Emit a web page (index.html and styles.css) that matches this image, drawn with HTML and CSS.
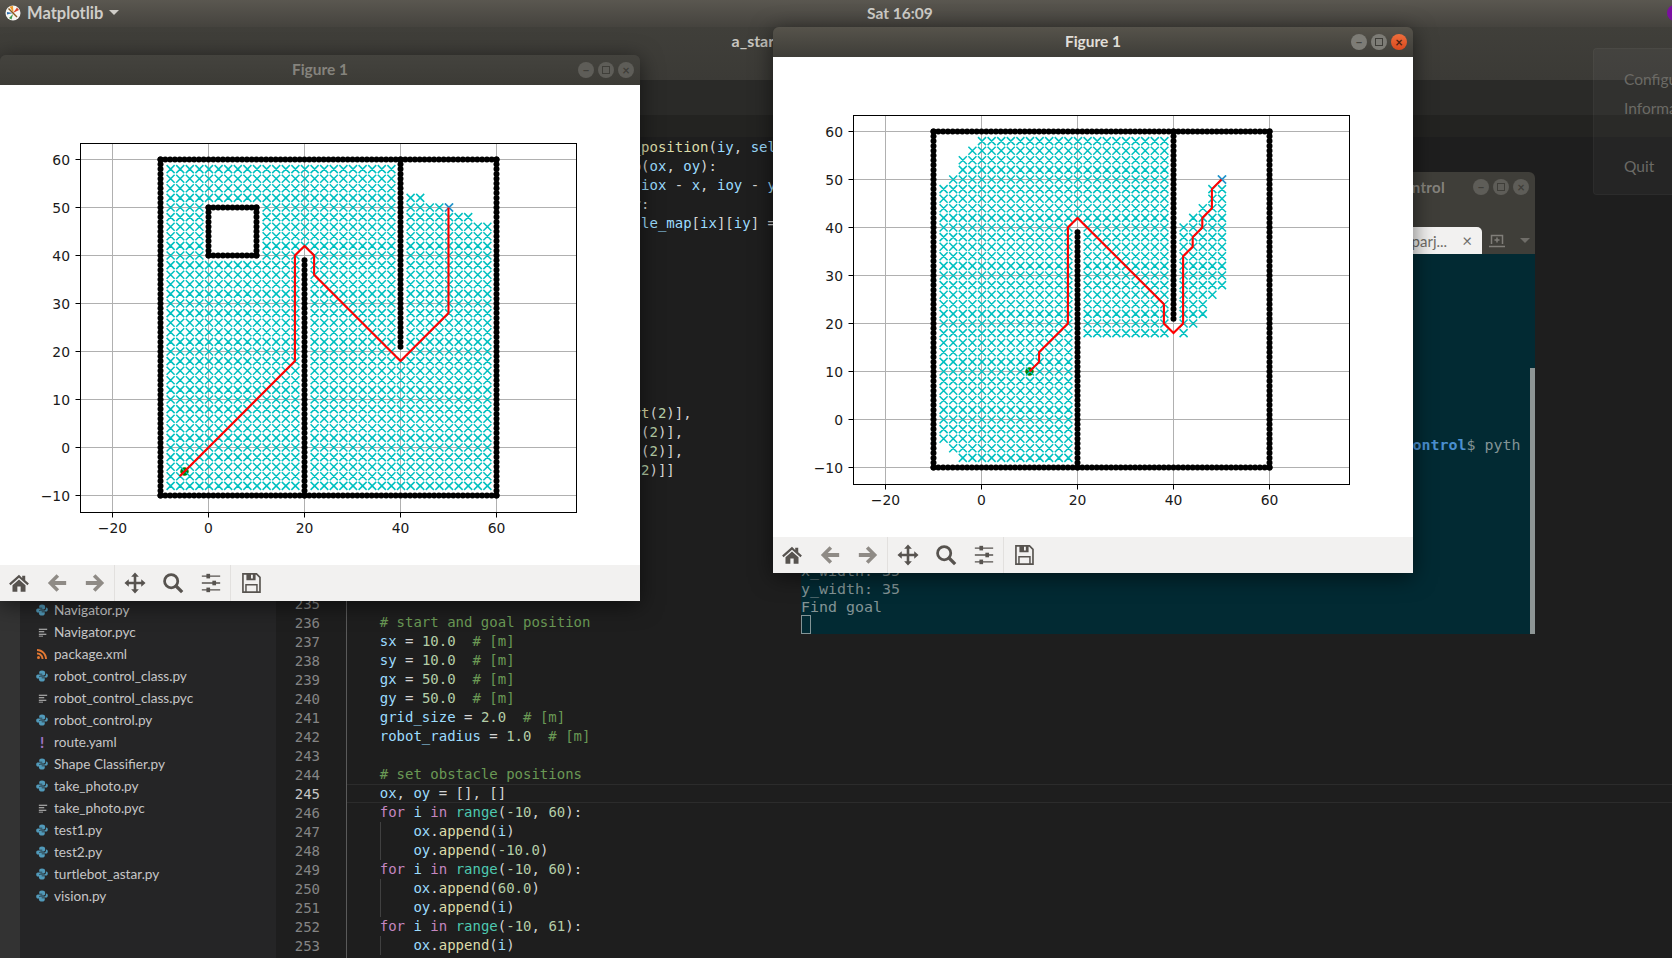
FILE: index.html
```html
<!DOCTYPE html>
<html lang="en">
<head>
    <meta charset="UTF-8">
    <meta name="viewport" content="width=device-width, initial-scale=1.0">
    <title>Matplotlib - Figure 1</title>
    <link rel="stylesheet" href="styles.css">
</head>
<body>
    <svg class="defs" width="0" height="0">
        <symbol id="i-home" viewBox="0 0 24 24">
            <path d="M12 3 1.2 12.6 2.8 14.4 12 6.3l9.2 8.1 1.6-1.8-4-3.5V4.2h-3.3v2.4z"/>
            <path d="M12 8.2 4.9 14.4V21.500h5.300v-5.600h3.600v5.600h5.300v-7.100z"/>
        </symbol>
        <symbol id="i-back" viewBox="0 0 24 24">
            <path d="M11.500 2.500 2 12l9.500 9.500 2.800-2.800-4.700-4.600H22V9.900H9.600l4.700-4.600z"/>
        </symbol>
        <symbol id="i-forward" viewBox="0 0 24 24">
            <path d="M12.500 2.500 22 12l-9.500 9.500-2.800-2.800 4.700-4.600H2V9.900h12.400L9.700 5.300z"/>
        </symbol>
        <symbol id="i-move" viewBox="0 0 24 24">
            <path d="M12 .5l4.200 4.700h-2.800v5.400h5.400V7.800l4.700 4.200-4.700 4.200v-2.800h-5.400v5.400h2.800L12 23.500l-4.200-4.700h2.800v-5.400H5.200v2.800L.5 12l4.700-4.200v2.800h5.400V5.200H7.800z"/>
        </symbol>
        <symbol id="i-zoom" viewBox="0 0 24 24">
            <circle cx="10" cy="10" r="7.200" fill="none" stroke="currentColor" stroke-width="3"/>
            <path d="M15 15l7 7" fill="none" stroke="currentColor" stroke-width="3.600"/>
        </symbol>
        <symbol id="i-sliders" viewBox="0 0 24 24">
            <path d="M2 4.500h20M2 12h20M2 19.500h20" fill="none" stroke="currentColor" stroke-width="1.500"/>
            <rect x="7" y="2" width="4" height="5"/>
            <rect x="13.500" y="9.500" width="4" height="5"/>
            <rect x="7" y="17" width="4" height="5"/>
        </symbol>
        <symbol id="i-save" viewBox="0 0 24 24">
            <path d="M3.200 2H18l3.800 3.800V22H3.200z" fill="none" stroke="currentColor" stroke-width="1.800"/>
            <path d="M7 2v7h10V2h-3v5h-2V2z"/>
            <path d="M6.500 22v-8h12v8" fill="none" stroke="currentColor" stroke-width="1.600"/>
        </symbol>
        <symbol id="i-py" viewBox="0 0 12 12">
            <path d="M6 .4C4 .4 3.200 1.200 3.200 2.500V3.800H6.300V4.400H1.900C.8 4.400.2 5.300.2 6.500.2 7.800.8 8.600 1.900 8.600H3V7.300C3 6.200 3.800 5.400 5 5.400H7.700C8.500 5.400 9.100 4.800 9.100 4V2.500C9.100 1.200 8 .4 6 .4Z"/>
            <path d="M6 11.600C8 11.600 8.800 10.800 8.800 9.500V8.200H5.700V7.600H10.100C11.200 7.600 11.800 6.700 11.800 5.500 11.800 4.200 11.200 3.400 10.100 3.400H9.900V4.700C9.900 5.800 9 6.600 7.900 6.600H4.300C3.500 6.600 2.900 7.200 2.900 8V9.500C2.900 10.800 4 11.600 6 11.600Z"/>
        </symbol>
        <symbol id="i-lines" viewBox="0 0 12 12">
            <path d="M1 2h10v1.200H1zM1 5h6.500v1.200H1zM1 8h9v1.200H1zM1 10.500h5v1H1z"/>
        </symbol>
        <symbol id="i-rss" viewBox="0 0 12 12">
            <circle cx="2.500" cy="9.500" r="1.500"/>
            <path d="M1 4.500c3.600 0 6.500 2.900 6.500 6.500H5.600C5.600 8.500 3.500 6.400 1 6.400z"/>
            <path d="M1 1c5.500 0 10 4.500 10 10H9.100C9.100 6.500 5.500 2.900 1 2.900z"/>
        </symbol>
    </svg>

    <header class="topbar">
        <div class="app-menu">
            <svg class="app-logo" viewBox="0 0 16 16">
                <circle cx="8" cy="8" r="7.500" fill="#f6f6f2"/>
                <path d="M8.500 8 4.500 1.500 8 1z" fill="#ee9a2a"/>
                <path d="M8 8 12 2.500 14 5z" fill="#d8442c"/>
                <path d="M8 9 4 13 6.500 14.500z" fill="#3c9a4a"/>
                <path d="M8 8 2 9.500 2 7z" fill="#3070b0"/>
                <path d="M3.500 3.500l8.500 8.500" stroke="#8a5a20" stroke-width="1.400"/>
            </svg>
            <span class="app-name">Matplotlib</span>
            <span class="menu-caret"></span>
        </div>
        <div class="clock">Sat 16:09</div>
        <div class="tray"><span class="tray-dot"></span></div>
    </header>

    <div class="editor">
        <div class="editor-title">a_star.py - catkin_ws - VS Code</div>
        <div class="editor-menu"></div>
        <div class="editor-tabs"></div>
        <div class="editor-body">
            <div class="activity"></div>
            <aside class="files">
                <div class="file"><svg class="ficon py"><use href="#i-py"/></svg>Navigator.py</div>
                <div class="file"><svg class="ficon txt"><use href="#i-lines"/></svg>Navigator.pyc</div>
                <div class="file"><svg class="ficon xml"><use href="#i-rss"/></svg>package.xml</div>
                <div class="file"><svg class="ficon py"><use href="#i-py"/></svg>robot_control_class.py</div>
                <div class="file"><svg class="ficon txt"><use href="#i-lines"/></svg>robot_control_class.pyc</div>
                <div class="file"><svg class="ficon py"><use href="#i-py"/></svg>robot_control.py</div>
                <div class="file"><span class="ficon yaml">!</span>route.yaml</div>
                <div class="file"><svg class="ficon py"><use href="#i-py"/></svg>Shape Classifier.py</div>
                <div class="file"><svg class="ficon py"><use href="#i-py"/></svg>take_photo.py</div>
                <div class="file"><svg class="ficon txt"><use href="#i-lines"/></svg>take_photo.pyc</div>
                <div class="file"><svg class="ficon py"><use href="#i-py"/></svg>test1.py</div>
                <div class="file"><svg class="ficon py"><use href="#i-py"/></svg>test2.py</div>
                <div class="file"><svg class="ficon py"><use href="#i-py"/></svg>turtlebot_astar.py</div>
                <div class="file"><svg class="ficon py"><use href="#i-py"/></svg>vision.py</div>
            </aside>
            <div class="gutter">
                <div>211</div><div>212</div><div>213</div><div>214</div><div>215</div><div>216</div>
                <div>217</div><div>218</div><div>219</div><div>220</div><div>221</div><div>222</div>
                <div>223</div><div>224</div><div>225</div><div>226</div><div>227</div><div>228</div>
                <div>229</div><div>230</div><div>231</div><div>232</div><div>233</div><div>234</div>
                <div>235</div><div>236</div><div>237</div><div>238</div><div>239</div><div>240</div>
                <div>241</div><div>242</div><div>243</div><div>244</div><div class="current">245</div>
                <div>246</div><div>247</div><div>248</div><div>249</div><div>250</div><div>251</div>
                <div>252</div><div>253</div>
            </div>
            <div class="code">
                <div>                <span class="v">y</span> = <span class="v">self</span>.<span class="f">calc_grid_position</span>(<span class="v">iy</span>, <span class="v">self</span>.<span class="v">miny</span>)</div>
                <div>                <span class="k">for</span> <span class="v">iox</span>, <span class="v">ioy</span> <span class="k">in</span> <span class="f">zip</span>(<span class="v">ox</span>, <span class="v">oy</span>):</div>
                <div>                    <span class="v">d</span> = <span class="v">math</span>.<span class="f">hypot</span>(<span class="v">iox</span> - <span class="v">x</span>, <span class="v">ioy</span> - <span class="v">y</span>)</div>
                <div>                    <span class="k">if</span> <span class="v">d</span> &lt;= <span class="v">self</span>.<span class="v">rr</span>:</div>
                <div>                        <span class="v">self</span>.<span class="v">obstacle_map</span>[<span class="v">ix</span>][<span class="v">iy</span>] = <span class="b">True</span></div>
                <div>                        <span class="k">break</span></div>
                <div> </div>
                <div>    <span class="f">@staticmethod</span></div>
                <div>    <span class="b">def</span> <span class="f">get_motion_model</span>():</div>
                <div>        <span class="c"># dx, dy, cost</span></div>
                <div>        <span class="v">motion</span> = [[<span class="n">1</span>, <span class="n">0</span>, <span class="n">1</span>],</div>
                <div>                  [<span class="n">0</span>, <span class="n">1</span>, <span class="n">1</span>],</div>
                <div>                  [<span class="n">-1</span>, <span class="n">0</span>, <span class="n">1</span>],</div>
                <div>                  [<span class="n">0</span>, <span class="n">-1</span>, <span class="n">1</span>],</div>
                <div>                  [<span class="n">-1</span>, <span class="n">-1</span>, <span class="v">math</span>.<span class="f">sqrt</span>(<span class="n">2</span>)],</div>
                <div>                  [<span class="n">-1</span>, <span class="n">1</span>, <span class="v">math</span>.<span class="f">sqrt</span>(<span class="n">2</span>)],</div>
                <div>                  [<span class="n">1</span>, <span class="n">-1</span>, <span class="v">math</span>.<span class="f">sqrt</span>(<span class="n">2</span>)],</div>
                <div>                  [<span class="n">1</span>, <span class="n">1</span>, <span class="v">math</span>.<span class="f">sqrt</span>(<span class="n">2</span>)]]</div>
                <div> </div>
                <div>        <span class="k">return</span> <span class="v">motion</span></div>
                <div> </div>
                <div> </div>
                <div><span class="b">def</span> <span class="f">main</span>():</div>
                <div>    <span class="f">print</span>(<span class="v">__file__</span> + <span class="s">" start!!"</span>)</div>
                <div> </div>
                <div>    <span class="c"># start and goal position</span></div>
                <div>    <span class="v">sx</span> = <span class="n">10.0</span>  <span class="c"># [m]</span></div>
                <div>    <span class="v">sy</span> = <span class="n">10.0</span>  <span class="c"># [m]</span></div>
                <div>    <span class="v">gx</span> = <span class="n">50.0</span>  <span class="c"># [m]</span></div>
                <div>    <span class="v">gy</span> = <span class="n">50.0</span>  <span class="c"># [m]</span></div>
                <div>    <span class="v">grid_size</span> = <span class="n">2.0</span>  <span class="c"># [m]</span></div>
                <div>    <span class="v">robot_radius</span> = <span class="n">1.0</span>  <span class="c"># [m]</span></div>
                <div> </div>
                <div>    <span class="c"># set obstacle positions</span></div>
                <div class="current">    <span class="v">ox</span>, <span class="v">oy</span> = [], []</div>
                <div>    <span class="k">for</span> <span class="v">i</span> <span class="k">in</span> <span class="t">range</span>(<span class="n">-10</span>, <span class="n">60</span>):</div>
                <div>    <span class="guide">    </span><span class="v">ox</span>.<span class="f">append</span>(<span class="v">i</span>)</div>
                <div>    <span class="guide">    </span><span class="v">oy</span>.<span class="f">append</span>(<span class="n">-10.0</span>)</div>
                <div>    <span class="k">for</span> <span class="v">i</span> <span class="k">in</span> <span class="t">range</span>(<span class="n">-10</span>, <span class="n">60</span>):</div>
                <div>    <span class="guide">    </span><span class="v">ox</span>.<span class="f">append</span>(<span class="n">60.0</span>)</div>
                <div>    <span class="guide">    </span><span class="v">oy</span>.<span class="f">append</span>(<span class="v">i</span>)</div>
                <div>    <span class="k">for</span> <span class="v">i</span> <span class="k">in</span> <span class="t">range</span>(<span class="n">-10</span>, <span class="n">61</span>):</div>
                <div>    <span class="guide">    </span><span class="v">ox</span>.<span class="f">append</span>(<span class="v">i</span>)</div>
            </div>
        </div>
    </div>

    <div class="popup">
        <div class="popup-item">Configure</div>
        <div class="popup-item">Information</div>
        <div class="popup-item popup-quit">Quit</div>
    </div>

    <section class="terminal">
        <div class="term-head">
            <div class="term-title">parjanya@parjanya-Inspiron-5567: ~/catkin_ws/src/turtlebot_ws/robot_control</div>
            <div class="win-buttons">
                <span class="wbtn">&#8211;</span>
                <span class="wbtn wbtn-max"></span>
                <span class="wbtn">&#215;</span>
            </div>
        </div>
        <div class="term-tabs">
            <div class="term-tab"><span>parjanya@parj...</span><span class="tab-close">&#215;</span></div>
            <svg class="tab-new" viewBox="0 0 16 14">
                <path d="M2.500 10V1.500h11V10M0 12.500h16M8 3.500v5M5.500 6h5" fill="none" stroke="#807e79" stroke-width="1.500"/>
            </svg>
            <span class="tab-caret"></span>
        </div>
        <div class="term-body">
            <div class="term-text">
                <div><span class="p-host">parjanya@parjanya-Inspiron-5567</span>:<span class="p-path">~/catkin_ws/src/turtlebot_ws/robot_control</span>$ pyth</div>
                <div>on a_star.py</div>
                <div>a_star.py start!!</div>
                <div>min_x: -10</div>
                <div>min_y: -10</div>
                <div>max_x: 60</div>
                <div>max_y: 60</div>
                <div>x_width: 35</div>
                <div>y_width: 35</div>
                <div>Find goal</div>
                <div><span class="term-cursor"></span></div>
            </div>
            <div class="term-scroll"></div>
        </div>
    </section>

    <section class="figure figure-back">
        <div class="fig-title">
            <span>Figure 1</span>
            <div class="win-buttons">
                <span class="wbtn">&#8211;</span>
                <span class="wbtn wbtn-max"></span>
                <span class="wbtn">&#215;</span>
            </div>
        </div>
        <svg class="plot" id="plotWalls" width="640" height="480"></svg>
        <div class="toolbar">
            <svg class="tool dark"><use href="#i-home"/></svg>
            <svg class="tool light"><use href="#i-back"/></svg>
            <svg class="tool light"><use href="#i-forward"/></svg>
            <span class="tool-sep"></span>
            <svg class="tool dark"><use href="#i-move"/></svg>
            <svg class="tool dark"><use href="#i-zoom"/></svg>
            <svg class="tool dark"><use href="#i-sliders"/></svg>
            <span class="tool-sep"></span>
            <svg class="tool dark"><use href="#i-save"/></svg>
        </div>
    </section>

    <section class="figure figure-front">
        <div class="fig-title">
            <span>Figure 1</span>
            <div class="win-buttons">
                <span class="wbtn">&#8211;</span>
                <span class="wbtn wbtn-max"></span>
                <span class="wbtn wbtn-close">&#215;</span>
            </div>
        </div>
        <svg class="plot" id="plotOpen" width="640" height="480"></svg>
        <div class="toolbar">
            <svg class="tool dark"><use href="#i-home"/></svg>
            <svg class="tool light"><use href="#i-back"/></svg>
            <svg class="tool light"><use href="#i-forward"/></svg>
            <span class="tool-sep"></span>
            <svg class="tool dark"><use href="#i-move"/></svg>
            <svg class="tool dark"><use href="#i-zoom"/></svg>
            <svg class="tool dark"><use href="#i-sliders"/></svg>
            <span class="tool-sep"></span>
            <svg class="tool dark"><use href="#i-save"/></svg>
        </div>
    </section>

    <script src="plot.js"></script>
</body>
</html>
```
FILE: styles.css
```css
html, body {
    margin: 0;
    padding: 0;
    overflow: hidden;
}

body {
    position: relative;
    width: 1672px;
    height: 958px;
    background-color: #1e1e1e;
    font-family: Lato, "Noto Sans", sans-serif;
}

.defs {
    position: absolute;
}

/* top panel */
.topbar {
    display: grid;
    grid-template-columns: 867px auto 1fr;
    align-items: center;
    box-sizing: border-box;
    height: 27px;
    padding-bottom: 2px;
    background: linear-gradient(#5a5750, #45433e);
    color: #cfcdc8;
    font-size: 15.5px;
    font-weight: 700;
}

.app-menu {
    display: flex;
    align-items: center;
    gap: 6px;
    padding-left: 5px;
}

.app-name {
    font-size: 16.5px;
}

.app-logo {
    width: 16px;
    height: 16px;
}

.menu-caret {
    border-left: 5px solid transparent;
    border-right: 5px solid transparent;
    border-top: 5px solid #cfcdc8;
}

.tray {
    display: flex;
    justify-content: flex-end;
}

.tray-dot {
    width: 16px;
    height: 16px;
    margin-right: -11px;
    border-radius: 50%;
    background-color: #7a0fa0;
}

/* editor behind the windows */
.editor-title {
    height: 49px;
    padding-top: 4px;
    padding-left: 12px;
    background: linear-gradient(#403f3a, #3b3a36);
    color: #c9c7c1;
    font-size: 16px;
    font-weight: 700;
    line-height: 20px;
    text-align: center;
}

.editor-menu {
    height: 35px;
    background-color: #2a2a28;
}

.editor-tabs {
    height: 22px;
    background-color: #232321;
}

.editor-body {
    display: flex;
    height: 821px;
    overflow: hidden;
}

.activity {
    width: 20px;
    background-color: #333333;
}

.files {
    width: 256px;
    padding-top: 462px;
    box-sizing: border-box;
    background-color: #252526;
    color: #c6c6c6;
    font-size: 13.6px;
}

.file {
    display: flex;
    align-items: center;
    height: 22px;
    padding-left: 16px;
}

.ficon {
    flex: none;
    width: 12px;
    height: 12px;
    margin-right: 6px;
}

.ficon.py {
    fill: #519aba;
}

.ficon.txt {
    fill: #c6c6c6;
    width: 10px;
    margin-left: 2px;
    margin-right: 6px;
}

.ficon.xml {
    fill: #e37933;
}

.ficon.yaml {
    color: #a074c4;
    font-size: 15px;
    font-weight: 700;
    line-height: 12px;
    text-align: center;
}

.gutter {
    width: 71px;
    padding-top: 2px;
    padding-right: 26px;
    box-sizing: border-box;
    border-right: 1px solid #5a5a5a;
    color: #858585;
    font-family: "DejaVu Sans Mono", monospace;
    font-size: 14px;
    line-height: 19px;
    text-align: right;
}

.gutter .current {
    color: #c6c6c6;
}

.code {
    flex: 1;
    margin-left: -1px;
    padding-top: 1px;
    color: #d4d4d4;
    font-family: "DejaVu Sans Mono", monospace;
    font-size: 14px;
    line-height: 19px;
}

.code > div {
    height: 19px;
    white-space: pre;
}

.code .current {
    box-sizing: border-box;
    margin-left: 1px;
    padding-left: 0;
    border-top: 1px solid #2c2c2c;
    border-bottom: 1px solid #2c2c2c;
    line-height: 17px;
    text-indent: -1px;
}

.v { color: #9cdcfe; }
.f { color: #dcdcaa; }
.k { color: #c586c0; }
.b { color: #569cd6; }
.t { color: #4ec9b0; }
.n { color: #b5cea8; }
.c { color: #6a9955; }
.s { color: #ce9178; }

.guide {
    display: inline-block;
    box-shadow: inset 1px 0 #404040;
}

/* tray popup, dimmed */
.popup {
    position: absolute;
    left: 1593px;
    top: 48px;
    width: 100px;
    height: 147px;
    box-sizing: border-box;
    padding: 20px 0 0 30px;
    border: 1px solid rgba(255, 255, 255, 0.03);
    border-radius: 4px;
    background-color: rgba(255, 255, 255, 0.035);
    color: #6b6a65;
    font-size: 15.5px;
    white-space: nowrap;
}

.popup-item {
    height: 29px;
    line-height: 20px;
}

.popup-quit {
    margin-top: 29px;
}

/* windows */
.terminal {
    position: absolute;
    left: 801px;
    top: 172px;
    display: flex;
    flex-direction: column;
    width: 734px;
    height: 462px;
    border-radius: 6px 6px 0 0;
    background-color: #3f3e39;
    overflow: hidden;
}

.term-head {
    display: flex;
    align-items: center;
    height: 30px;
    flex: none;
}

.term-title {
    flex: 1;
    padding-right: 28px;
    color: #85837d;
    font-size: 15px;
    font-weight: 700;
    letter-spacing: 0.3px;
    text-align: right;
    white-space: nowrap;
}

.term-tabs {
    display: flex;
    align-items: center;
    flex: none;
    height: 27px;
    margin-top: 25px;
}

.term-tab {
    display: flex;
    justify-content: flex-end;
    align-items: center;
    gap: 15px;
    width: 681px;
    height: 27px;
    padding-right: 10px;
    box-sizing: border-box;
    border-radius: 0 5px 0 0;
    background-color: #f2f1f0;
    color: #6f6d68;
    font-size: 15px;
}

.tab-close {
    font-size: 17px;
    line-height: 17px;
}

.tab-new {
    width: 16px;
    height: 14px;
    margin-left: 7px;
}

.tab-caret {
    margin-left: 15px;
    border-left: 5px solid transparent;
    border-right: 5px solid transparent;
    border-top: 5px solid #6f6d68;
}

.term-body {
    display: flex;
    flex: 1;
    background-color: #022a33;
    color: #839496;
    font-family: "DejaVu Sans Mono", monospace;
    font-size: 14.95px;
    line-height: 18px;
    white-space: pre;
}

.term-text {
    display: flex;
    flex: 1;
    flex-direction: column;
    justify-content: flex-end;
}

.p-host {
    color: #859900;
    font-weight: 700;
}

.p-path {
    color: #4a8fd0;
    font-weight: 700;
}

.term-cursor {
    display: block;
    width: 10px;
    height: 19px;
    margin-top: -1px;
    box-sizing: border-box;
    border: 1px solid #839496;
}

.term-scroll {
    align-self: flex-end;
    width: 5px;
    height: 266px;
    background-color: #8d9595;
}

.figure {
    position: absolute;
    display: flex;
    flex-direction: column;
    width: 640px;
    border-radius: 6px 6px 0 0;
    box-shadow: 0 4px 22px rgba(0, 0, 0, 0.55);
}

.figure-back {
    left: 0;
    top: 55px;
}

.figure-front {
    left: 773px;
    top: 27px;
}

.fig-title {
    display: flex;
    align-items: center;
    justify-content: center;
    position: relative;
    box-sizing: border-box;
    height: 30px;
    padding-bottom: 2px;
    border-radius: 6px 6px 0 0;
    background: linear-gradient(#44433e, #3c3b36);
    color: #85837d;
    font-size: 15.5px;
    font-weight: 700;
}

.figure-front .fig-title {
    background: linear-gradient(#56534b, #3e3d38);
    color: #e0ded8;
}

.win-buttons {
    position: absolute;
    right: 6px;
    top: 7px;
    display: flex;
    gap: 4px;
}

.term-head .win-buttons {
    position: static;
    padding-right: 6px;
}

.wbtn {
    display: flex;
    align-items: center;
    justify-content: center;
    width: 16px;
    height: 16px;
    border-radius: 50%;
    background-color: #5e5d58;
    color: #3f3e39;
    font-size: 13px;
    font-weight: 700;
    line-height: 16px;
}

.figure-front .wbtn {
    background-color: #7d7c76;
    color: #45443f;
}

.wbtn-max::before {
    content: "";
    width: 6px;
    height: 6px;
    border: 1px solid #3f3e39;
}

.figure-front .wbtn-close {
    background: linear-gradient(#ee6e3c, #d9491f);
    color: #4a1f10;
}

.plot {
    display: block;
    background-color: #fff;
}

.tick {
    font-family: "DejaVu Sans", sans-serif;
    font-size: 13.9px;
    fill: #1a1a1a;
}

.toolbar {
    display: flex;
    align-items: center;
    height: 36px;
    background-color: #f2f1f0;
}

.tool {
    width: 22px;
    height: 22px;
    padding: 0 8px;
    flex: none;
}

.tool.dark {
    color: #57534f;
    fill: #57534f;
}

.tool.light {
    color: #8f8b86;
    fill: #8f8b86;
}

.tool-sep {
    width: 1px;
    height: 36px;
    margin: 0 1px 0 0;
    flex: none;
    background-color: #e2e0de;
}
```
FILE: plot.js
```js
const SCALE = 4.8;
const SVG_NS = 'http://www.w3.org/2000/svg';
const X_TICKS = [-20, 0, 20, 40, 60];
const Y_TICKS = [-10, 0, 10, 20, 30, 40, 50, 60];
const AXES = { left: 80.5, right: 576.5, top: 58.5, bottom: 427.5 };

function px(v) {
    return 208.5 + v * SCALE;
}

function py(v) {
    return 362.5 - v * SCALE;
}

function add(svg, tag, attrs, text) {
    const el = document.createElementNS(SVG_NS, tag);
    for (const key in attrs) {
        el.setAttribute(key, attrs[key]);
    }
    if (text) {
        el.textContent = text;
    }
    svg.appendChild(el);
    return el;
}

function tickLabel(v) {
    return String(v).replace('-', '\u2212');
}

function walls(hasBox) {
    const points = [];
    for (let i = -10; i <= 60; i++) {
        points.push([i, -10], [i, 60]);
    }
    for (let i = -10; i <= 60; i++) {
        points.push([-10, i], [60, i]);
    }
    for (let i = -10; i < 40; i++) {
        points.push([20, i]);
    }
    for (let i = 21; i <= 60; i++) {
        points.push([40, i]);
    }
    if (hasBox) {
        for (let i = 0; i <= 10; i++) {
            points.push([i, 40], [i, 50], [0, 40 + i], [10, 40 + i]);
        }
    }
    return points;
}

// explored cells when the box is in the way
function seenWalls(x, y) {
    if (x === 20 && y <= 40) return false;
    if (x === 40 && y >= 20) return false;
    if (x >= 0 && x <= 10 && y >= 40 && y <= 50) return false;
    if (x >= 42) {
        if (x <= 44) return y <= 52;
        if (x <= 50) return y <= 50;
        if (x <= 54) return y <= 48;
        return y <= 46;
    }
    return true;
}

// explored cells for the open run, which stops at the goal
function seenOpen(x, y) {
    if (x === 20 && y <= 40) return false;
    if (x === 40 && y >= 20) return false;
    if (x < 20) {
        let start = -8;
        if (y === 58) start = 0;
        if (y === 56) start = -2;
        if (y === 54 || y === 52 || y === -8) start = -4;
        if (y === 50 || y === -6) start = -6;
        return x >= start;
    }
    if (x <= 38) {
        return y >= 18;
    }
    if (y < 18 || y > 50) return false;
    let end = 50;
    if (y === 18) end = 42;
    if (y === 20) end = 44;
    if (y === 22 || y === 24) end = 46;
    if (y === 26) end = 48;
    let start = 42;
    if (y === 42) start = 44;
    if (y === 44) start = 46;
    if (y === 46 || y === 48) start = 48;
    if (y === 50) start = 50;
    return x >= start && x <= end;
}

function crosses(points, half) {
    return points.map(([x, y]) => {
        const cx = px(x) + 0.5;
        const cy = py(y);
        return 'M' + (cx - half) + ' ' + (cy - half) + 'L' + (cx + half) + ' ' + (cy + half) +
            'M' + (cx - half) + ' ' + (cy + half) + 'L' + (cx + half) + ' ' + (cy - half);
    }).join('');
}

function drawPlot(svg, options) {
    X_TICKS.forEach((v) => {
        add(svg, 'line', { x1: px(v), x2: px(v), y1: AXES.top, y2: AXES.bottom, stroke: '#b0b0b0' });
        add(svg, 'line', { x1: px(v), x2: px(v), y1: AXES.bottom, y2: AXES.bottom + 5, stroke: '#000' });
        add(svg, 'text', { x: px(v), y: 448, class: 'tick', 'text-anchor': 'middle' }, tickLabel(v));
    });
    Y_TICKS.forEach((v) => {
        add(svg, 'line', { x1: AXES.left, x2: AXES.right, y1: py(v), y2: py(v), stroke: '#b0b0b0' });
        add(svg, 'line', { x1: AXES.left - 5, x2: AXES.left, y1: py(v), y2: py(v), stroke: '#000' });
        add(svg, 'text', { x: 70, y: py(v) + 5, class: 'tick', 'text-anchor': 'end' }, tickLabel(v));
    });

    walls(options.hasBox).forEach(([x, y]) => {
        add(svg, 'circle', { cx: px(x), cy: py(y), r: 3, fill: '#000' });
    });

    add(svg, 'circle', { cx: px(options.start[0]), cy: py(options.start[1]), r: 4.2, fill: '#008000' });

    const cells = [];
    for (let x = -8; x <= 58; x += 2) {
        for (let y = -8; y <= 58; y += 2) {
            if (options.seen(x, y)) {
                cells.push([x, y]);
            }
        }
    }
    add(svg, 'path', { d: crosses(cells, 4), stroke: '#00c0c0', 'stroke-width': 1.5, fill: 'none' });
    add(svg, 'path', { d: crosses([[50, 50]], 4), stroke: '#2f8fd0', 'stroke-width': 1.5, fill: 'none' });

    const line = options.path.map(([x, y]) => px(x) + ',' + py(y)).join(' ');
    add(svg, 'polyline', { points: line, stroke: '#ff0000', 'stroke-width': 2.1, fill: 'none' });

    add(svg, 'rect', {
        x: AXES.left,
        y: AXES.top,
        width: AXES.right - AXES.left,
        height: AXES.bottom - AXES.top,
        stroke: '#000',
        fill: 'none'
    });
}

drawPlot(document.getElementById('plotWalls'), {
    hasBox: true,
    start: [-5, -5],
    seen: seenWalls,
    path: [[-6, -6], [18, 18], [18, 40], [20, 42], [22, 40], [22, 36], [40, 18], [50, 28], [50, 50]]
});

drawPlot(document.getElementById('plotOpen'), {
    hasBox: false,
    start: [10, 10],
    seen: seenOpen,
    path: [[10, 10], [12, 12], [12, 14], [18, 20], [18, 40], [20, 42], [38, 24], [38, 20], [40, 18],
        [42, 20], [42, 34], [44, 36], [44, 38], [46, 40], [46, 42], [48, 44], [48, 48], [50, 50]]
});
```
